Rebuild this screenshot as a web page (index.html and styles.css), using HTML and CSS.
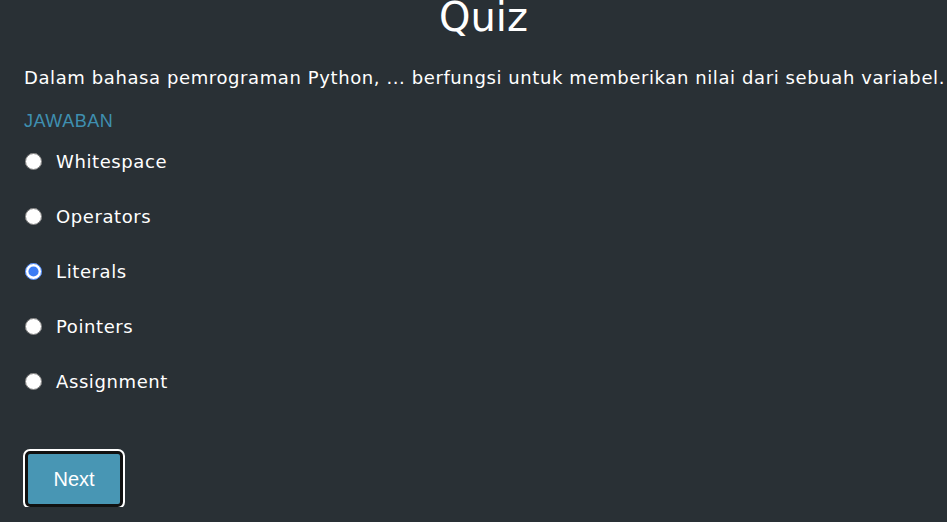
FILE: index.html
```html
<!DOCTYPE html>
<html>
<head>
<meta charset="utf-8">
<link rel="stylesheet" href="styles.css">
</head>
<body>
<main class="quiz">
  <h1 class="title">Quiz</h1>
  <p class="question">Dalam bahasa pemrograman Python, ... berfungsi untuk memberikan nilai dari sebuah variabel.</p>
  <div class="answer-label">JAWABAN</div>
  <div class="options">
    <label class="option"><input type="radio" name="a"><span>Whitespace</span></label>
    <label class="option"><input type="radio" name="a"><span>Operators</span></label>
    <label class="option"><input type="radio" name="a" checked><span>Literals</span></label>
    <label class="option"><input type="radio" name="a"><span>Pointers</span></label>
    <label class="option"><input type="radio" name="a"><span>Assignment</span></label>
  </div>
  <button class="next">Next</button>
</main>
</body>
</html>
```
FILE: styles.css
```css
html, body {
  margin: 0;
  background: #293035;
}
body {
  font-family: "DejaVu Sans", "Open Sans", sans-serif;
  color: #ffffff;
}
.quiz {
  padding: 0 24px;
  display: flex;
  flex-direction: column;
  align-items: flex-start;
}
.title {
  align-self: stretch;
  text-align: center;
  font-size: 40px;
  font-weight: 500;
  margin: -11px 0 0;
  padding-left: 20px;
  line-height: 56px;
}
.question {
  font-size: 18px;
  letter-spacing: 0.6px;
  margin: 20px 0 0;
  line-height: 26px;
  white-space: nowrap;
}
.answer-label {
  font-family: "Liberation Sans", Arial, sans-serif;
  color: #3f8fb0;
  font-size: 18px;
  margin-top: 20px;
  letter-spacing: 0.5px;
}
.options {
  display: flex;
  flex-direction: column;
  gap: 29px;
  margin-top: 16px;
}
.option {
  display: flex;
  align-items: center;
  gap: 14px;
  font-size: 18px;
  letter-spacing: 0.6px;
  height: 26px;
}
.option input {
  margin: 0 0 0 1px;
  width: 17px;
  height: 17px;
  accent-color: #3b7cf5;
}
.next {
  margin-top: 57px;
  font-family: "Liberation Sans", Arial, sans-serif;
  font-size: 20px;
  color: #ffffff;
  background: #4896b4;
  border: 3px solid #111;
  border-radius: 5px;
  outline: 2px solid #ffffff;
  outline-offset: 0;
  width: 98px;
  height: 56px;
  margin-left: 1px;
}
```
